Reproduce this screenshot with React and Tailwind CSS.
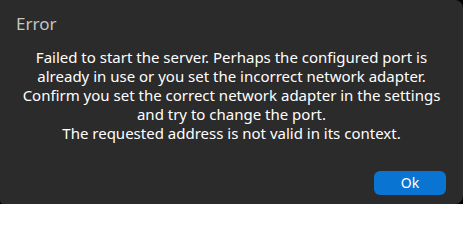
import React from "react";

const App = () => {
  return (
    <div className="w-[463px] h-[204px] bg-black">
      <div
        className="w-full h-full bg-[#2b2b2b] rounded-r-[8px] rounded-bl-[4px] flex flex-col px-4 pt-[12px] pb-[9px]"
        style={{ fontFamily: '"Noto Sans", "Open Sans", sans-serif' }}
      >
        <h1 className="text-[17px] leading-[24px] text-[#c4c4c4]">Error</h1>
        <p className="mt-[12px] text-center text-[15px] leading-[19px] text-white">
          Failed to start the server. Perhaps the configured port is
          <br />
          already in use or you set the incorrect network adapter.
          <br />
          Confirm you set the correct network adapter in the settings
          <br />
          and try to change the port.
          <br />
          The requested address is not valid in its context.
        </p>
        <div className="mt-auto flex justify-end pr-[1px]">
          <button className="w-[72px] h-[24px] rounded-[6px] bg-[#0a74d2] text-white text-[14px] leading-[24px]">
            Ok
          </button>
        </div>
      </div>
    </div>
  );
};

export default App;
